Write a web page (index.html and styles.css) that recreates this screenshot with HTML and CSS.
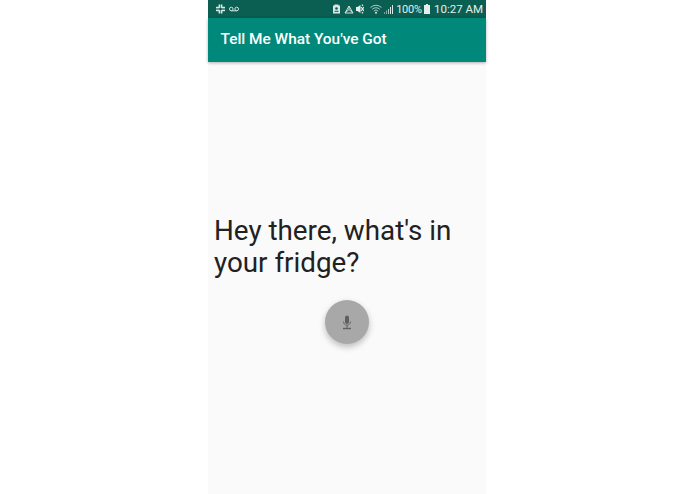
FILE: index.html
```html
<!DOCTYPE html>
<html lang="en">
<head>
<meta charset="utf-8">
<title>Tell Me What You've Got</title>
<link rel="stylesheet" href="styles.css">
</head>
<body>
<div class="phone">
  <header class="status">
    <div class="status-left">
      <svg class="ic" width="9" height="10" viewBox="0 0 9 10"><g fill="#dbe9e6"><rect x="0" y="2.800" width="3.400" height="1.600"/><rect x="5.600" y="5.600" width="3.400" height="1.600"/><rect x="2.600" y="0.500" width="1.600" height="3.400"/><rect x="4.800" y="6.100" width="1.600" height="3.400"/><rect x="4.800" y="0.500" width="1.600" height="3.400"/><rect x="5.600" y="2.800" width="3.400" height="1.600"/><rect x="2.600" y="6.100" width="1.600" height="3.400"/><rect x="0" y="5.600" width="3.400" height="1.600"/></g></svg>
      <svg class="ic" width="10" height="6" viewBox="0 0 10 6"><g fill="none" stroke="#cfe2de" stroke-width="1"><circle cx="2.300" cy="3" r="1.800"/><circle cx="7.700" cy="3" r="1.800"/><path d="M2.300 4.800h5.400"/></g></svg>
    </div>
    <div class="status-right">
      <svg class="ic" width="7" height="10" viewBox="0 0 7 10"><path fill="#dbe9e6" d="M0 1.500h1.500V.5h4v1H7v8H0z"/><circle cx="3.500" cy="4.500" r="1.300" fill="#0a5f52"/><rect x="1.500" y="6.800" width="4" height="1" fill="#0a5f52"/></svg>
      <svg class="ic gap-recycle" width="10" height="9" viewBox="0 0 10 9"><g fill="none" stroke="#cfe2de" stroke-width="1"><path d="M5 1 1 8h8z"/><path d="M5 1v3.500M1 8l4-3.500L9 8"/></g></svg>
      <svg class="ic gap-mute" width="8" height="10" viewBox="0 0 8 10"><path fill="#e3efec" d="M0 3h1.500L4.500 1v8L1.500 7H0z"/><path stroke="#e3efec" stroke-width="1.200" d="M5 3 8 7M8 3 5 7M6 .5l1 1.500M6 9.500l1-1.500"/></svg>
      <svg class="ic gap-wifi" width="12" height="10" viewBox="0 0 12 10"><g fill="none" stroke="#a9c9c2" stroke-width="1"><path d="M.5 3.500a8 8 0 0 1 11 0"/><path d="M2.200 5.300a5.400 5.400 0 0 1 7.600 0"/><path d="M3.900 7a3 3 0 0 1 4.200 0"/></g><circle cx="6" cy="8.800" r="1" fill="#dbe9e6"/></svg>
      <svg class="ic gap-bars" width="9" height="9" viewBox="0 0 9 9"><g fill="#dbe9e6"><rect x="0" y="7" width="1" height="2" opacity=".5"/><rect x="2" y="5.500" width="1" height="3.500" opacity=".6"/><rect x="4" y="4" width="1" height="5" opacity=".8"/><rect x="6" y="2" width="1" height="7"/><rect x="8" y="0" width="1" height="9"/></g></svg>
      <span class="pct">100%</span>
      <svg class="ic gap-batt" width="6" height="10" viewBox="0 0 6 10"><path fill="#e3efec" d="M2 0h2v1h2v9H0V1h2z"/></svg>
      <span class="time">10:27 AM</span>
    </div>
  </header>
  <div class="appbar">Tell Me What You've Got</div>
  <main class="content">
    <h1 class="prompt">Hey there, what's in your fridge?</h1>
    <button class="mic" type="button" aria-label="Speak">
      <svg width="12" height="15" viewBox="0 0 12 15"><rect x="4" y="0.500" width="4" height="8.500" rx="2" fill="#5f5f5f"/><path d="M2.500 6.500c0 5 7 5 7 0" fill="none" stroke="#6a6a6a" stroke-width="1"/><rect x="5.500" y="10" width="1" height="3" fill="#666"/><rect x="2" y="12.800" width="8" height="1.400" fill="#5f5f5f"/></svg>
    </button>
  </main>
</div>
</body>
</html>
```
FILE: styles.css
```css
* { box-sizing: border-box; }
html, body { height: 100%; }
body {
  margin: 0;
  background: #fff;
  font-family: Roboto, "Liberation Sans", sans-serif;
  overflow: hidden;
}
.phone {
  width: 278px;
  height: 494px;
  margin-left: 208px;
  background: #fafafa;
  display: flex;
  flex-direction: column;
}
.status {
  height: 18px;
  background: #0a5f52;
  display: flex;
  align-items: center;
  justify-content: space-between;
  padding: 0 3px 0 8px;
  color: #e3efec;
  font-size: 11.500px;
  flex: none;
}
.status-left, .status-right {
  display: flex;
  align-items: center;
}
.status-left { gap: 4px; }
.ic { display: block; flex: none; }
.gap-recycle { margin-left: 4px; }
.gap-mute { margin-left: 2px; }
.gap-wifi { margin-left: 6px; }
.gap-bars { margin-left: 2px; }
.pct { margin-left: 3px; font-size: 11px; letter-spacing: -0.200px; }
.gap-batt { margin-left: 2px; }
.time { margin-left: 4px; }
.appbar {
  height: 44px;
  flex: none;
  background: #00897b;
  color: #fff;
  font-size: 15.400px;
  font-weight: 500;
  display: flex;
  align-items: center;
  padding: 0 0 2px 12.500px;
  box-shadow: 0 1px 3px rgba(0, 0, 0, .3);
  position: relative;
}
.content {
  flex: 1;
  display: flex;
  flex-direction: column;
  padding-top: 153px;
}
.prompt {
  margin: 0;
  padding-left: 6px;
  padding-right: 20px;
  font-size: 27.800px;
  font-weight: 400;
  line-height: 32px;
  color: #212121;
}
.mic {
  width: 44px;
  height: 44px;
  margin: 21px 0 0 117px;
  padding: 0;
  border: 0;
  border-radius: 50%;
  background: #a8a8a8;
  box-shadow: 0 3px 6px rgba(0, 0, 0, .25);
  display: flex;
  align-items: center;
  justify-content: center;
}
```
